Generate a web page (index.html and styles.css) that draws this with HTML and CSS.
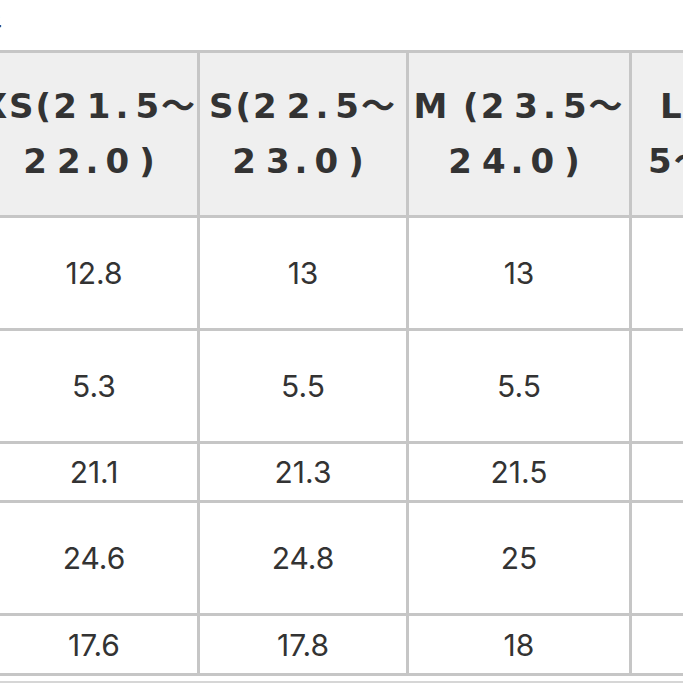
FILE: index.html
```html
<!DOCTYPE html>
<html lang="ko">
<head>
<meta charset="utf-8">
<title>사이즈표</title>
<link rel="stylesheet" href="styles.css">
</head>
<body>
<div class="page">
  <div class="title"><span class="title-text">사이즈</span></div>
  <div class="grid">
    <div class="cell head">
      <span class="l1 shift">XS(<span class="num">2</span><span class="tail">1</span><span class="dot">.</span>5～</span>
      <span class="l2"><span class="num">2</span><span class="tail">2</span><span class="dot">.</span><span class="num">0</span>)</span>
    </div>
    <div class="cell head">
      <span class="l1">S(<span class="num">2</span><span class="tail">2</span><span class="dot">.</span>5～</span>
      <span class="l2"><span class="num">2</span><span class="tail">3</span><span class="dot">.</span><span class="num">0</span>)</span>
    </div>
    <div class="cell head">
      <span class="l1">M (<span class="num">2</span><span class="tail">3</span><span class="dot">.</span>5～</span>
      <span class="l2"><span class="num">2</span><span class="tail">4</span><span class="dot">.</span><span class="num">0</span>)</span>
    </div>
    <div class="cell head head-last">
      <span class="l1">L (<span class="num">2</span><span class="tail">4</span><span class="dot">.</span></span>
      <span class="l2">5～<span class="num">2</span><span class="tail">5</span><span class="dot">.</span><span class="num">0</span>)</span>
    </div>

    <div class="cell">12.8</div><div class="cell">13</div><div class="cell">13</div><div class="cell">13.2</div>
    <div class="cell">5.3</div><div class="cell">5.5</div><div class="cell">5.5</div><div class="cell">5.7</div>
    <div class="cell">21.1</div><div class="cell">21.3</div><div class="cell">21.5</div><div class="cell">21.7</div>
    <div class="cell">24.6</div><div class="cell">24.8</div><div class="cell">25</div><div class="cell">25.2</div>
    <div class="cell">17.6</div><div class="cell">17.8</div><div class="cell">18</div><div class="cell">18.2</div>
  </div>
  <div class="next-line"></div>
</div>
</body>
</html>
```
FILE: styles.css
```css
html, body {
  margin: 0;
  padding: 0;
  background: #ffffff;
  overflow: hidden;
}
body {
  width: 683px;
  height: 683px;
  font-family: "Inter", "Noto Sans CJK KR", sans-serif;
  color: #333333;
}
.page {
  width: 900px;
}
.title {
  height: 50px;
  display: flex;
  align-items: flex-start;
  overflow: hidden;
}
.title-text {
  font-family: "Noto Sans CJK KR", sans-serif;
  font-size: 32px;
  line-height: 40px;
  margin-left: -86px;
  margin-top: -6px;
  color: #2e2e2e;
}
.grid {
  display: grid;
  grid-template-columns: 206px 206px 220px 230px;
  grid-template-rows: 162px 110px 110px 56px 110px 57px;
  gap: 3px;
  padding: 3px;
  background: #c6c6c6;
  width: max-content;
  margin-left: -12px;
}
.cell {
  background: #ffffff;
  display: flex;
  align-items: center;
  justify-content: center;
  font-size: 30px;
  color: #333333;
}
.cell.head {
  background: #efefef;
  flex-direction: column;
  font-family: "DejaVu Sans", "Noto Sans CJK KR", sans-serif;
  font-weight: 700;
  font-size: 34px;
  line-height: 55px;
  letter-spacing: 2px;
  white-space: nowrap;
  color: #333333;
}
.num {
  letter-spacing: 10px;
}
.tail {
  letter-spacing: 5px;
}
.dot {
  letter-spacing: 7px;
}
.l2 {
  padding-right: 8px;
}
.shift {
  padding-right: 10px;
}
.head-last {
  align-items: flex-start;
  padding-left: 28px;
}
.head-last .l2 {
  margin-left: -12px;
  padding-right: 0;
}
.next-line {
  margin-top: 5px;
  height: 2px;
  background: #d6d6d6;
  margin-left: -12px;
}
```
